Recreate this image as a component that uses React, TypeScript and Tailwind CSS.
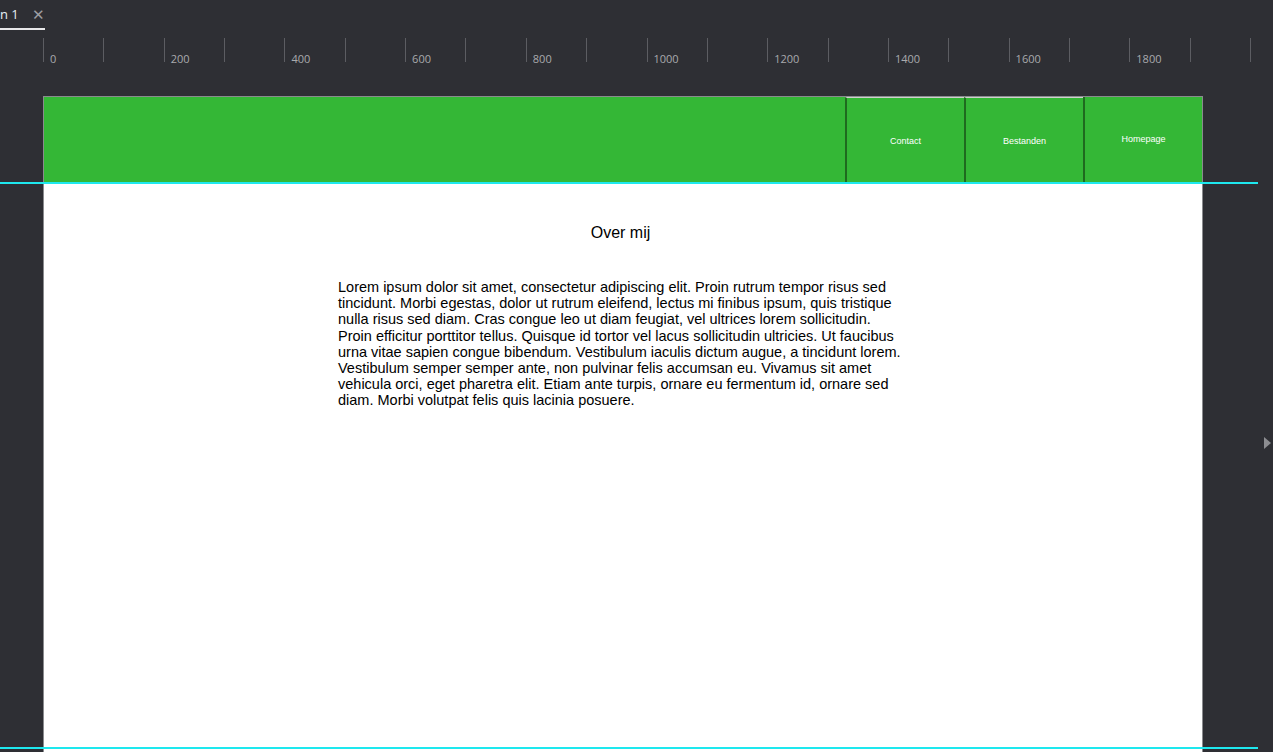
import React from "react";

const lines = [
  "Lorem ipsum dolor sit amet, consectetur adipiscing elit. Proin rutrum tempor risus sed",
  "tincidunt. Morbi egestas, dolor ut rutrum eleifend, lectus mi finibus ipsum, quis tristique",
  "nulla risus sed diam. Cras congue leo ut diam feugiat, vel ultrices lorem sollicitudin.",
  "Proin efficitur porttitor tellus. Quisque id tortor vel lacus sollicitudin ultricies. Ut faucibus",
  "urna vitae sapien congue bibendum. Vestibulum iaculis dictum augue, a tincidunt lorem.",
  "Vestibulum semper semper ante, non pulvinar felis accumsan eu. Vivamus sit amet",
  "vehicula orci, eget pharetra elit. Etiam ante turpis, ornare eu fermentum id, ornare sed",
  "diam. Morbi volutpat felis quis lacinia posuere.",
];

// ruler: one tick every 100 units, 60.35px apart, label every 200
const Ruler = () => {
  const ticks = Array.from({ length: 21 }, (_, i) => i);
  return (
    <div className="relative h-[32px] mt-[8px]">
      {ticks.map((i) => (
        <div
          key={i}
          className="absolute top-0 h-[24px] w-px bg-[#5c5d62]"
          style={{ left: 43 + i * 60.35 }}
        >
          {i % 2 === 0 && i < 20 && (
            <span className="absolute left-[7px] top-[15px] text-[11px] leading-none text-[#a9aaad] whitespace-nowrap">
              {i * 100}
            </span>
          )}
        </div>
      ))}
    </div>
  );
};

const NavBox = ({ label, topLine }: { label: string; topLine?: boolean }) => (
  <div
    className={`w-[119px] h-full flex items-center justify-center border-l-2 border-[#1f6b1f] ${
      topLine ? "border-t border-t-[#cfd2cf] pt-[2px]" : ""
    }`}
  >
    <span className="text-[9px] text-white" style={{ fontFamily: '"Liberation Sans", Arial, sans-serif' }}>
      {label}
    </span>
  </div>
);

export default function App() {
  return (
    <div
      className="w-[1273px] h-[752px] bg-[#2e2f34] overflow-hidden relative"
      style={{ fontFamily: '"Open Sans", sans-serif' }}
    >
      {/* tab */}
      <div className="h-[30px] flex items-start">
        <div className="w-[45px] h-[30px] border-b-2 border-[#e8e8ea] flex items-center gap-[13px] pt-[1px]">
          <span className="text-[13px] text-[#e6eef5] leading-none">n 1</span>
          <span className="text-[#9d9ea2] text-[15px] leading-none">✕</span>
        </div>
      </div>

      <Ruler />

      {/* artboard */}
      <div className="absolute left-[43px] top-[96px] w-[1160px] h-[680px] border-l border-t border-r border-[#8a8b8e] bg-white">
        <div className="h-[86px] bg-[#34b736] flex justify-end">
          <NavBox label="Contact" topLine />
          <NavBox label="Bestanden" topLine />
          <NavBox label="Homepage" />
        </div>

        <div style={{ fontFamily: '"Liberation Sans", Arial, sans-serif' }}>
          <h1 className="text-center text-[16px] text-black mt-[38px] ml-[-5px]">Over mij</h1>
          <div className="ml-[294px] mt-[34px] text-[14.5px] leading-[16.2px] text-black">
            {lines.map((l, i) => (
              <div key={i} className="whitespace-nowrap">
                {l}
              </div>
            ))}
          </div>
        </div>
      </div>

      {/* guides */}
      <div className="absolute left-0 top-[182px] w-[1258px] h-[2px] bg-[#1ee8ee]" />
      <div className="absolute left-0 top-[747px] w-[1258px] h-[2px] bg-[#1ee8ee]" />

      {/* panel toggle arrow */}
      <div className="absolute left-[1264px] top-[437px] w-0 h-0 border-y-[6px] border-y-transparent border-l-[7px] border-l-[#8c8d91]" />
    </div>
  );
}
